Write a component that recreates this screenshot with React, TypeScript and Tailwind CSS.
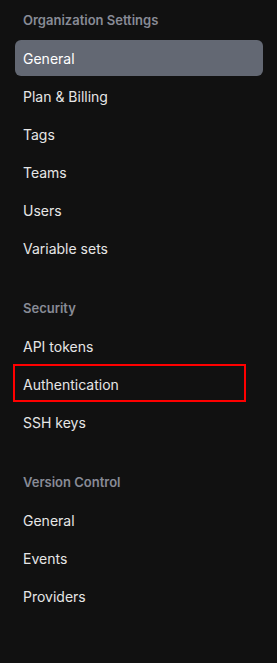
const sections = [
  {
    title: 'Organization Settings',
    items: ['General', 'Plan & Billing', 'Tags', 'Teams', 'Users', 'Variable sets'],
    active: 'General',
  },
  {
    title: 'Security',
    items: ['API tokens', 'Authentication', 'SSH keys'],
    highlight: 'Authentication',
  },
  {
    title: 'Version Control',
    items: ['General', 'Events', 'Providers'],
  },
];

export default function App() {
  return (
    <div className="min-h-[663px] w-[277px] bg-[#111111] pt-[3px] font-['Inter',sans-serif]">
      <nav className="flex flex-col gap-[25px] pl-[15px] pr-[14px]">
        {sections.map((s) => (
          <div key={s.title} className="flex flex-col gap-[2px]">
            <div className="flex h-[35px] items-center px-2 text-[13px] font-semibold text-[#888b96]">{s.title}</div>
            {s.items.map((item) => (
              <div key={item} className="relative">
                <a
                  href="#"
                  className={
                    item === s.active
                      ? 'flex h-9 items-center rounded-md bg-[#636873] px-2 text-[14px] text-white'
                      : 'flex h-9 items-center rounded-md px-2 text-[14px] text-[#e6e6e6]'
                  }
                >
                  {item}
                </a>
                {item === s.highlight && (
                  <div className="pointer-events-none absolute -top-[2px] -left-[2px] h-[38px] w-[233px] border-2 border-[#ff0000]" />
                )}
              </div>
            ))}
          </div>
        ))}
      </nav>
    </div>
  );
}
